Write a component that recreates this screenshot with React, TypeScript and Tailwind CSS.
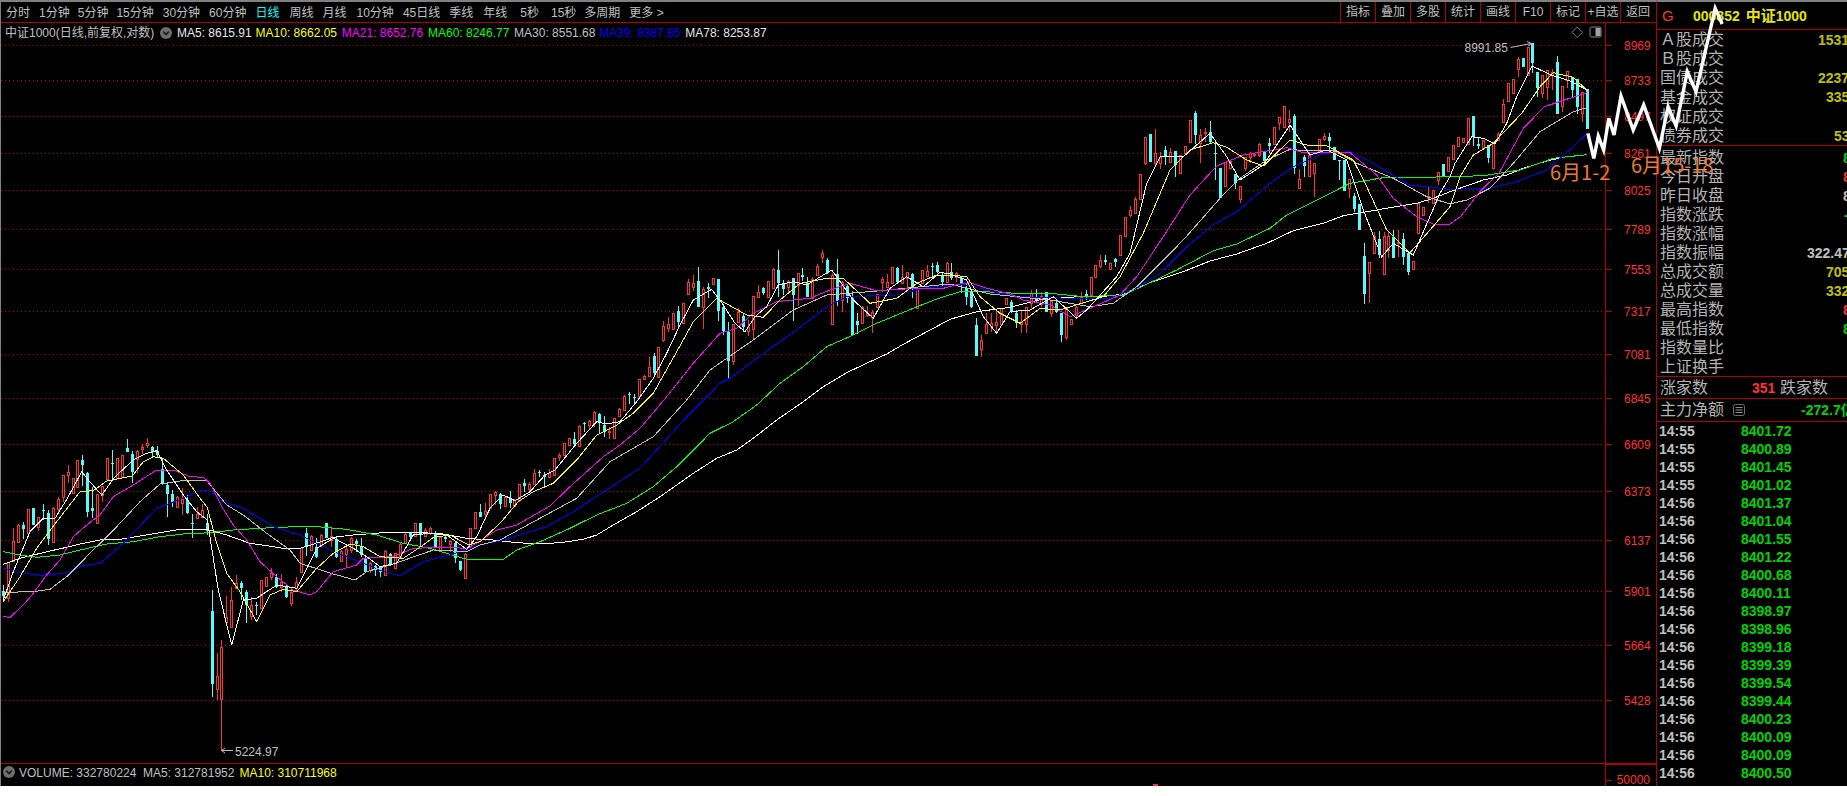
import React from "react";

type C = [number, number, number, number, number, number];
type Group = { ox: number; oy: number; items: C[] };

// [zoomX, cyan?, high, bodyTop, bodyBottom, low]
const groups: Group[] = [
  { ox: 0, oy: 420, items: [
    [10,1,495,513,528,540],[25,0,425,425,535,545],[40,0,325,362,422,422],[55,0,312,315,365,368],[70,1,307,315,327,358],[85,0,267,267,340,340],[100,1,265,265,315,315],[115,0,290,292,320,332],[130,1,252,270,272,300],[145,1,270,280,358,375],[160,0,262,265,365,365],[175,0,232,238,268,275],[190,0,165,165,232,245],[205,0,135,155,165,190],[220,0,175,175,220,220],[233,0,120,120,200,200],[248,1,105,120,135,198],[262,1,155,158,275,290],[277,1,200,264,272,295],[292,0,222,222,310,310],[307,0,197,197,225,245],[322,0,113,113,177,177],[337,1,90,128,131,180],[351,0,115,115,175,175],[367,0,105,105,172,172],[382,1,58,85,95,95],[397,1,92,102,155,190],[412,0,90,93,117,160],[427,0,72,82,87,102],[442,0,55,70,75,85],[457,1,78,80,97,110],[472,1,78,92,105,115],[487,1,115,148,190,195],[502,1,185,195,222,290],[517,1,210,222,250,262],[532,0,228,230,262,262],[547,0,205,238,250,285],[562,1,225,240,280,282],[577,1,282,310,312,355],[592,0,262,283,295,295],[607,0,252,270,290,290],[622,1,282,310,334,345],[637,1,510,573,792,832],[652,0,698,768,808,840],[665,0,660,682,836,990],[680,0,528,592,605,605],[695,0,502,540,620,620],[710,0,465,488,505,505],[725,1,482,488,505,540],[740,1,510,515,555,608],[755,0,530,555,588,600],[770,1,545,555,557,585],[785,0,480,480,565,565],[800,0,470,472,498,498],[814,0,445,460,470,480],[830,1,462,470,500,505],[845,0,462,485,500,515],[859,1,495,497,530,535],[875,0,505,515,550,558],[889,0,472,485,505,515],[905,0,385,385,455,455],[919,1,325,340,380,408],[934,0,345,348,390,392],[949,1,355,380,410,415],[964,0,342,345,378,380],[979,1,310,310,355,355],[994,0,325,347,360,380],[1009,1,350,358,410,415],[1024,0,390,393,423,425],[1039,0,380,388,403,440],[1054,0,352,355,390,400],[1069,1,358,362,372,395],[1083,1,355,382,405,410],[1097,1,410,413,455,460],[1111,0,425,430,450,458],[1126,1,435,437,450,468],[1141,1,440,440,455,470],[1156,0,390,392,465,465],[1171,1,400,402,432,438],[1186,0,398,400,445,447],[1201,0,370,372,410,415],[1216,0,340,342,370,372],[1231,1,335,340,350,360],[1246,0,308,310,348,350],[1260,1,310,310,345,382],[1275,0,325,330,348,350],[1290,0,322,325,340,345],[1305,1,332,340,382,385],[1320,0,350,352,392,392],[1336,1,345,350,358,365],[1352,0,360,362,372,395],[1366,1,365,368,415,428],[1381,1,422,422,450,452],[1396,0,400,402,473,473],[1411,0,325,325,382,382],[1426,0,275,275,325,325],
  ]},
  { ox: 460, oy: 230, items: [
    [60,1,822,846,860,860],[75,0,820,843,852,870],[90,0,792,792,833,833],[106,0,783,785,795,825],[121,1,790,792,822,837],[136,0,800,802,828,830],[151,1,783,803,820,833],[163,0,808,810,828,830],[178,0,762,763,810,815],[193,1,747,760,768,785],[208,0,755,763,778,785],[223,0,717,730,762,765],[238,1,720,727,730,742],[253,1,725,735,742,773],[268,0,718,730,742,745],[283,0,685,685,735,735],[298,0,670,675,680,692],[313,0,640,640,675,675],[328,0,623,625,645,648],[343,1,605,628,642,648],[358,0,585,587,647,647],[373,1,575,578,580,605],[388,0,570,572,585,597],[403,0,543,545,578,590],[418,1,548,553,580,610],[433,1,558,585,607,622],[448,0,592,603,607,628],[463,0,565,565,625,627],[478,0,535,538,558,560],[493,0,495,497,540,542],[508,1,487,493,495,522],[523,1,492,502,505,522],[538,0,446,448,497,500],[553,0,435,437,448,450],[568,0,380,410,437,437],[583,1,370,377,428,440],[596,0,352,352,442,442],[611,0,272,287,330,335],[626,0,262,283,293,305],[641,0,250,250,298,300],[655,1,228,243,275,290],[670,0,220,220,280,282],[685,0,148,155,192,195],[700,0,135,160,170,182],[715,1,112,153,230,232],[730,0,172,177,230,296],[745,1,158,172,178,205],[760,0,143,145,163,165],[775,1,148,148,242,272],[790,1,222,232,303,315],[805,1,277,305,392,445],[820,0,282,283,392,405],[835,0,235,245,277,280],[850,1,250,258,290,307],[865,0,270,292,302,318],[880,0,198,198,298,328],[895,0,165,187,200,205],[910,1,170,173,190,195],[925,0,153,153,200,200],[940,0,115,117,175,178],[955,1,60,120,160,200],[970,1,150,160,177,195],[985,0,150,152,172,190],[1000,1,145,145,195,272],[1015,0,128,130,165,228],[1027,1,115,135,140,152],[1042,1,140,160,200,200],[1057,0,140,148,205,208],[1073,0,103,107,135,137],[1087,0,60,70,82,98],[1102,1,85,90,130,133],[1117,0,130,135,282,282],[1132,1,88,133,212,228],[1147,0,153,155,210,245],[1162,1,165,167,205,220],[1177,1,182,205,315,315],[1192,1,250,273,285,312],[1207,0,228,230,280,282],[1222,0,228,248,255,262],[1237,0,240,245,262,308],[1252,0,192,192,232,235],[1267,0,140,147,157,185],[1282,0,132,157,170,172],[1297,0,112,112,158,160],[1312,1,112,115,155,157],[1327,0,105,142,158,160],[1342,0,125,127,143,180],[1357,1,130,132,175,205],[1372,0,175,175,235,237],[1387,0,120,120,158,160],[1402,0,105,123,138,142],[1417,1,100,107,110,148],[1432,1,97,105,125,130],[1447,1,125,135,155,172],[1462,0,95,98,155,158],[1474,1,100,127,142,145],[1489,0,125,130,142,155],
  ]},
  { ox: 950, oy: 100, items: [
    [5,1,490,518,533,540],[34,1,530,533,555,580],[49,1,550,565,592,615],[64,1,570,573,622,625],[79,1,655,675,768,768],[94,0,705,720,748,770],[109,0,640,672,700,700],[124,0,640,670,678,695],[139,0,630,665,675,700],[154,0,625,625,672,672],[169,0,595,595,613,613],[184,1,600,607,632,640],[199,1,630,638,668,685],[214,0,630,665,672,700],[229,0,620,620,672,700],[244,0,570,578,610,625],[259,1,568,592,600,610],[274,0,575,588,612,622],[289,1,577,577,635,635],[304,0,603,603,638,650],[319,1,600,610,635,638],[334,1,640,640,705,725],[349,0,623,623,710,720],[364,0,657,657,673,673],[379,0,618,622,645,650],[394,0,575,590,610,612],[409,1,570,582,592,600],[424,0,532,532,585,585],[437,0,495,495,532,532],[452,0,465,480,497,505],[467,1,465,480,485,495],[481,0,488,488,507,507],[496,1,475,478,485,502],[512,0,405,405,465,465],[527,0,352,352,407,407],[542,0,318,330,345,350],[557,0,290,298,340,340],[572,0,223,223,298,298],[587,0,112,112,190,195],[602,1,102,102,185,185],[617,0,88,160,190,195],[632,0,155,170,190,208],[647,1,138,150,168,195],[662,0,145,155,187,190],[677,1,153,153,195,230],[691,0,165,165,218,218],[706,0,137,137,158,158],[721,0,60,60,127,127],[736,1,33,40,105,132],[751,0,88,105,128,190],[766,0,85,95,100,125],[781,1,63,97,125,130],[796,1,122,160,162,240],[811,1,205,205,295,295],[826,0,185,185,258,262],[841,0,183,183,205,205],[856,1,222,222,248,268],[871,0,258,258,298,310],[885,0,172,172,205,212],[900,0,155,158,170,188],[914,0,160,162,165,170],[928,0,128,132,165,170],[943,1,155,155,183,183],[958,1,115,130,137,158],[973,0,82,82,132,132],[988,0,52,52,70,90],[1003,0,18,18,80,80],[1018,0,30,58,65,95],[1033,1,43,47,205,222],[1048,0,208,238,265,265],[1063,1,165,170,198,230],[1078,0,160,165,227,227],[1093,0,188,188,218,290],[1108,0,118,118,152,152],[1123,0,100,108,117,122],[1138,1,100,112,122,150],[1153,1,142,142,180,180],[1168,1,180,180,182,240],[1183,1,180,180,272,272],[1198,0,238,238,265,295],[1213,1,280,288,327,335],[1228,1,312,312,390,390],[1243,1,428,468,583,612],[1258,0,485,485,518,608],[1273,0,395,408,458,460],[1288,1,392,418,465,475],[1303,0,395,408,523,525],[1316,0,395,408,450,475],[1331,1,390,412,473,473],[1346,0,390,425,430,470],[1361,1,398,418,470,495],[1376,1,458,458,515,525],[1391,0,482,482,508,508],[1406,0,310,310,400,400],[1421,0,322,322,345,345],[1436,0,260,287,295,308],[1451,0,270,270,310,310],[1466,0,215,215,240,255],[1481,1,192,192,232,232],
  ]},
  { ox: 1340, oy: 0, items: [
    [326,0,470,470,513,513],[341,0,435,435,477,477],[356,0,410,410,437,437],[371,0,415,415,425,430],[386,0,355,355,433,433],[401,1,348,348,410,437],[416,1,410,432,437,447],[431,0,420,420,445,447],[446,1,435,435,473,490],[461,0,425,425,505,505],[476,0,395,402,420,420],[491,0,298,312,365,365],[506,0,250,250,303,303],[521,0,236,236,278,278],[536,0,172,178,208,230],[551,1,175,175,200,200],[566,0,142,142,225,225],[578,1,130,130,190,218],[593,1,215,215,265,292],[608,0,225,225,280,295],[622,0,210,210,260,300],[637,0,207,215,225,270],[652,1,168,185,342,342],[667,0,258,258,318,335],[682,0,212,212,240,265],[697,1,232,232,270,295],[712,1,238,238,322,342],[727,0,275,275,340,365],[742,1,267,267,387,387],
  ]},
];

const seg = (ox: number, oy: number, p: number[]) => {
  const out: string[] = [];
  for (let i = 0; i < p.length; i += 2) out.push(`${(ox + p[i] / 3).toFixed(1)},${(oy + p[i + 1] / 3).toFixed(1)}`);
  return out.join(" ");
};
const line = (a: number[], b: number[], c: number[], d: number[]) =>
  [seg(0, 420, a), seg(460, 230, b), seg(950, 100, c), seg(1340, 0, d)].join(" ");

const mas: { color: string; pts: string }[] = [
  { color: "#ffffff", pts: line(
    [10,433,60,415,100,405,150,393,200,382,250,370,300,360,360,358,420,348,480,338,540,328,620,328,680,345,750,370,800,377,850,385,900,385,950,370,1000,352,1060,345,1150,338,1250,337,1330,342,1400,355],
    [60,928,100,930,160,937,230,942,300,938,370,928,410,915,460,885,530,845,600,800,650,765,700,730,770,685,830,660,880,625,950,570,1030,515,1090,470,1160,428,1230,395,1280,372,1330,343,1420,295],
    [0,658,80,635,180,622,300,592,450,590,520,583,600,548,700,515,780,483,860,462,950,430,1030,392,1120,370,1180,347,1250,335,1350,318,1400,310,1450,295],
    [330,575,430,540,500,525,550,505,620,483,680,470,740,464]) },
  { color: "#00ff00", pts: line(
    [10,395,60,405,110,412,180,405,250,388,320,372,400,365,480,350,550,342,630,338,700,330,780,325,930,318,1040,328,1130,345,1210,370,1290,385,1340,400,1400,418],
    [60,990,130,988,170,960,240,935,330,895,410,855,500,820,580,770,650,710,750,610,820,575,890,525,960,460,1030,410,1100,350,1180,315,1250,280,1360,235,1430,207],
    [30,575,100,575,200,580,320,582,400,590,520,585,600,548,680,510,790,452,860,432,960,385,1010,345,1130,285,1200,250,1300,233,1420,232],
    [330,530,430,527,540,510,640,475,740,464]) },
  { color: "#0000ff", pts: line(
    [10,445,60,458,130,467,200,458,250,437,300,430,370,370,470,265,550,235,600,212,625,210,670,245,730,265,820,320,900,345,1000,395,1080,425,1150,455,1200,467,1270,425,1350,405],
    [60,945,130,930,260,890,340,845,470,760,540,715,680,560,780,460,810,445,890,385,1010,300,1100,230,1160,200,1310,195,1390,175],
    [30,552,70,560,140,578,210,590,360,595,480,595,560,565,630,520,710,440,790,375,860,335,960,250,1030,200,1120,160,1200,155,1270,190,1380,255],
    [330,568,450,565,530,545,620,510,700,440,742,400]) },
  { color: "#c0c0c0", pts: line(
    [10,517,100,515,150,508,200,470,270,400,350,320,420,245,480,192,540,183,620,182,680,255,730,285,800,340,870,390,900,430,1000,462,1065,480,1100,455,1180,432,1300,390,1400,395],
    [60,945,120,930,230,870,350,805,450,695,580,620,680,510,750,420,800,385,880,330,1000,240,1100,195,1170,190,1250,183],
    [0,552,120,582,300,600,420,620,490,610,560,560,700,420,810,295,870,235,950,180,1020,148,1060,152,1150,150,1220,190,1330,235,1430,290],
    [330,612,380,600,450,565,520,490,600,395,700,335,740,323]) },
  { color: "#ff00ff", pts: line(
    [10,590,30,592,70,555,100,520,140,465,180,420,220,350,260,315,300,285,340,230,400,195,470,150,520,150,570,170,610,172,630,190,665,260,700,315,740,360,780,425,830,470,880,510,930,525,950,515,1000,455,1070,435,1090,415,1180,410,1240,385,1330,382,1400,385],
    [50,940,110,900,170,885,270,828,330,770,430,680,480,645,540,595,620,500,700,400,780,310,830,295,880,250,950,215,1050,205,1110,180,1170,160,1250,182,1370,175,1450,175],
    [30,552,60,548,110,565,180,582,220,600,300,615,360,650,420,625,510,585,560,530,640,410,720,285,800,198,880,165,1010,143,1060,158,1200,158,1280,225,1330,295,1400,350,1450,372],
    [330,672,361,650,424,570,477,520,550,385,613,320,740,278]) },
  { color: "#ffff00", pts: line(
    [10,545,60,470,110,385,170,305,240,215,280,212,320,183,397,168,430,125,460,110,490,115,550,165,600,235,622,262,650,370,680,460,720,515,770,605,810,525,850,508,890,515,950,445,1000,400,1050,372,1090,380,1140,410,1210,415,1270,375,1300,352,1350,345,1400,372],
    [25,945,60,935,120,880,175,815,220,785,280,760,350,690,410,615,470,585,520,550,580,490,650,365,700,275,770,205,860,255,910,262,960,210,1020,160,1100,145,1150,145,1230,220,1310,205,1370,160,1430,135],
    [0,525,50,530,90,590,150,640,210,670,270,625,330,630,460,590,510,530,580,400,660,210,720,150,790,128,830,142,890,180,940,198,1020,120,1070,135,1130,137,1210,180,1250,260,1310,390,1380,458,1440,390],
    [330,620,360,530,400,465,460,430,545,340,600,260,640,218,700,232,742,272]) },
  { color: "#f4f4f4", pts: line(
    [10,540,40,455,90,335,130,295,165,295,205,230,245,155,265,180,305,225,345,170,400,120,440,100,470,92,500,150,550,225,590,275,622,300,655,510,695,675,730,540,770,535,830,495,890,505,950,385,1000,355,1060,385,1100,410,1140,440,1190,430,1240,345,1290,340,1340,345,1400,388],
    [50,920,90,835,130,795,165,812,210,785,255,735,285,720,350,640,410,575,440,582,480,575,530,515,580,445,620,370,660,285,700,210,755,178,790,225,825,280,855,305,885,260,920,230,955,165,1000,155,1040,165,1115,120,1180,210,1240,265,1290,175,1340,140,1390,170,1440,127],
    [0,522,50,540,100,650,140,700,180,635,240,630,310,590,380,655,410,630,500,530,540,460,590,250,630,170,700,170,780,100,830,170,870,240,940,195,1020,75,1080,165,1130,150,1190,180,1240,330,1295,470,1330,430,1390,465,1470,280],
    [330,530,345,490,395,410,430,415,465,432,500,370,530,290,576,198,634,225,696,245,740,270]) },
];

const axis: [string, number][] = [["8969",45.5],["8733",80.5],["8497",116.5],["8261",153.5],["8025",190.5],["7789",229.5],["7553",269.5],["7317",311.5],["7081",354.5],["6845",398.5],["6609",444.5],["6373",491.5],["6137",540.5],["5901",591.5],["5664",645.5],["5428",700.5]];

const handLine = "1587.9,133.3 1593.8,158.3 1598.3,136 1603.6,150 1608.8,118.3 1614,135 1621,96 1633.2,130 1643.7,105 1659.4,148.3 1668.1,106.7 1676.1,126 1687.3,71.7 1696,91.7 1715.2,8.3 1722.2,24";

const Chevron = () => (
  <svg width="12" height="12" viewBox="0 0 12 12" className="shrink-0">
    <circle cx="6" cy="6" r="6" fill="#6e6e6e" />
    <path d="M3.2 4.6 L6 7.6 L8.8 4.6" fill="none" stroke="#1a1a1a" strokeWidth="1.6" />
  </svg>
);

const left = [
  { t: "分时", c: "" }, { t: "1分钟", c: "ml-[9px]" }, { t: "5分钟", c: "ml-[8px]" }, { t: "15分钟", c: "ml-[8px]" }, { t: "30分钟", c: "ml-[9px]" }, { t: "60分钟", c: "ml-[9px]" },
  { t: "日线", c: "ml-[9px] text-[#00ffff]" }, { t: "周线", c: "ml-[10px]" }, { t: "月线", c: "ml-[9px]" }, { t: "10分钟", c: "ml-[10px]" }, { t: "45日线", c: "ml-[9px]" }, { t: "季线", c: "ml-[9px]" }, { t: "年线", c: "ml-[10px]" },
  { t: "5秒", c: "ml-[13px]" }, { t: "15秒", c: "ml-[12px]" }, { t: "多周期", c: "ml-[8px]" }, { t: "更多 >", c: "ml-[9px]" },
];
const rightTools = ["指标", "叠加", "多股", "统计", "画线", "F10", "标记", "+自选", "返回"];

const infoRow: { t: string; c: string }[] = [
  { t: "MA5: 8615.91", c: "w-[78.6px] text-[#e8e8e8]" },
  { t: "MA10: 8662.05", c: "w-[86.2px] text-[#ffff00]" },
  { t: "MA21: 8652.76", c: "w-[86.2px] text-[#ff00ff]" },
  { t: "MA60: 8246.77", c: "w-[86.1px] text-[#00ff00]" },
  { t: "MA30: 8551.68", c: "w-[85.2px] text-[#c0c0c0]" },
  { t: "MA39: 8387.85", c: "w-[86px] text-[#0000ff]" },
  { t: "MA78: 8253.87", c: "text-[#e8e8e8]" },
];

const sec1: { l: string; v: string; c: string }[] = [
  { l: "Ａ股成交", v: "1531", c: "ml-[94px] text-[#c0c000]" },
  { l: "Ｂ股成交", v: "", c: "" },
  { l: "国债成交", v: "2237", c: "ml-[94px] text-[#c0c000]" },
  { l: "基金成交", v: "335", c: "ml-[102px] text-[#c0c000]" },
  { l: "权证成交", v: "", c: "" },
  { l: "债券成交", v: "53", c: "ml-[110px] text-[#c0c000]" },
];
const sec2: { l: string; v: string; c: string }[] = [
  { l: "最新指数", v: "8", c: "ml-[119px] text-[#00d400]" },
  { l: "今日开盘", v: "8", c: "ml-[119px] text-[#ff3232]" },
  { l: "昨日收盘", v: "8", c: "ml-[119px] text-[#c0c0c0]" },
  { l: "指数涨跌", v: "-", c: "ml-[120px] text-[#00d400]" },
  { l: "指数涨幅", v: "", c: "" },
  { l: "指数振幅", v: "322.47", c: "ml-[83px] text-[#c0c0c0]" },
  { l: "总成交额", v: "705", c: "ml-[102px] text-[#c0c000]" },
  { l: "总成交量", v: "332", c: "ml-[102px] text-[#c0c000]" },
  { l: "最高指数", v: "8", c: "ml-[119px] text-[#ff3232]" },
  { l: "最低指数", v: "8", c: "ml-[119px] text-[#00d400]" },
  { l: "指数量比", v: "", c: "" },
  { l: "上证换手", v: "", c: "" },
];
const ticks: [string, string][] = [
  ["14:55","8401.72"],["14:55","8400.89"],["14:55","8401.45"],["14:55","8401.02"],["14:56","8401.37"],["14:56","8401.04"],["14:56","8401.55"],["14:56","8401.22"],["14:56","8400.68"],["14:56","8400.11"],["14:56","8398.97"],["14:56","8398.96"],["14:56","8399.18"],["14:56","8399.39"],["14:56","8399.54"],["14:56","8399.44"],["14:56","8400.23"],["14:56","8400.09"],["14:56","8400.09"],["14:56","8400.50"],
];

function Row({ l, v, c, h }: { l: string; v: string; c: string; h: string }) {
  return (
    <div className={`flex items-center pl-[3px] whitespace-nowrap ${h}`}>
      <span className="w-[64px] shrink-0 text-[16px] leading-[19px] text-[#b4b4b4]">{l}</span>
      {v && <span className={`shrink-0 text-[14px] font-bold ${c}`}>{v}</span>}
    </div>
  );
}

function Chart() {
  return (
    <svg width="1655" height="740" viewBox="1 23 1655 740" className="block">
      <g shapeRendering="crispEdges">
        {axis.map(([, y]) => (
          <g key={y}>
            <line x1="1" x2="1605" y1={y} y2={y} stroke="#c80000" strokeDasharray="1 3" />
            <line x1="1605" x2="1612" y1={y} y2={y} stroke="#b00000" />
          </g>
        ))}
        <line x1="1605.5" x2="1605.5" y1="23" y2="763" stroke="#b00000" />
      </g>
      {axis.map(([t, y]) => (
        <text key={t} x="1624" y={y + 4.5} fontSize="12" fill="#ff3232">{t}</text>
      ))}
      <g shapeRendering="crispEdges">
        {groups.flatMap((g, gi) =>
          g.items.map((c, i) => {
            const [zx, cy, h, t, b, l] = c;
            const k = Math.floor(g.ox + zx / 3);
            const cx = k + 0.5;
            const Y = (v: number) => Math.round(g.oy + v / 3);
            const bh = Math.max(Y(b) - Y(t), 1);
            if (cy) {
              return (
                <g key={`${gi}-${i}`}>
                  <line x1={cx} x2={cx} y1={Y(h)} y2={Y(l)} stroke="#54fcfc" />
                  <rect x={k - 1} y={Y(t)} width="3" height={bh} fill="#54fcfc" />
                </g>
              );
            }
            return (
              <g key={`${gi}-${i}`}>
                <line x1={cx} x2={cx} y1={Y(h)} y2={Y(t)} stroke="#ff3232" />
                <line x1={cx} x2={cx} y1={Y(b)} y2={Y(l)} stroke="#ff3232" />
                <rect x={cx - 1} y={Y(t) + 0.5} width="2" height={bh} fill="#000" stroke="#ff3232" />
              </g>
            );
          })
        )}
        {mas.map((m) => (
          <polyline key={m.color} points={m.pts} fill="none" stroke={m.color} strokeWidth="1" />
        ))}
      </g>
      <text x="1464.5" y="52" fontSize="12" fill="#c0c0c0">8991.85</text>
      <path d="M1510.5 47.5 L1531 43.5 M1527 41.5 L1531.5 43.5 L1528 46" fill="none" stroke="#c0c0c0" />
      <text x="235" y="756" fontSize="12" fill="#c0c0c0">5224.97</text>
      <path d="M221.5 750.5 H233 M225 748 L221.5 750.5 L225 753" fill="none" stroke="#c0c0c0" />
      <path d="M1577.3 27 L1582.5 32.3 L1577.3 37.5 L1572 32.3 Z" fill="none" stroke="#7a7a7a" />
      <rect x="1590" y="27" width="11" height="10" rx="1.5" fill="none" stroke="#8a8a8a" />
      <rect x="1595.5" y="28" width="5" height="8" fill="#a0a0a0" />
    </svg>
  );
}

export default function App() {
  return (
    <div className="relative flex h-[786px] w-[1847px] overflow-hidden bg-black font-['Liberation_Sans','Noto_Sans_CJK_SC',sans-serif] text-[12px] leading-none text-[#c0c0c0]">
      <div className="flex w-[1656px] shrink-0 flex-col border-t-2 border-l border-[#808080]">
        <div className="flex h-[21px] shrink-0 items-center justify-between border-b border-[#b00000]">
          <div className="flex items-center whitespace-nowrap pl-[5px] pt-[1px]">
            {left.map((x) => (
              <span key={x.t} className={x.c}>{x.t}</span>
            ))}
          </div>
          <div className="flex h-full">
            {rightTools.map((t) => (
              <span key={t} className="flex w-[35px] items-center justify-center whitespace-nowrap border-l border-[#b00000]">{t}</span>
            ))}
            <span className="w-[1px]" />
          </div>
        </div>
        <div className="relative h-[740px] shrink-0">
          <Chart />
          <div className="absolute left-[4px] top-[4px] flex items-center whitespace-nowrap">
            <span className="w-[155px] shrink-0 text-[#c0c0c0]">中证1000(日线,前复权,对数)</span>
            <span className="mr-[5px]"><Chevron /></span>
            {infoRow.map((x) => (
              <span key={x.t} className={`shrink-0 ${x.c}`}>{x.t}</span>
            ))}
          </div>
        </div>
        <div className="flex min-h-0 flex-1 border-t border-[#b00000]">
          <div className="relative flex w-[1604px] shrink-0 items-start pl-[2px] pt-[2px] whitespace-nowrap">
            <Chevron />
            <span className="ml-[4px] mt-[1px] w-[124px] shrink-0">VOLUME: 332780224</span>
            <span className="mt-[1px] w-[96.5px] shrink-0">MA5: 312781952</span>
            <span className="mt-[1px] text-[#ffff00]">MA10: 310711968</span>
            <span className="absolute bottom-0 left-[1152px] h-[2px] w-[5px] bg-[#ff3232]" />
          </div>
          <div className="relative flex flex-1 items-end justify-end border-t border-l border-[#b00000] pr-[6px] text-[#ff3232]">
            <span className="absolute left-0 top-[15px] h-[1px] w-[6px] bg-[#b00000]" />
            <span>50000</span>
          </div>
        </div>
      </div>

      <div className="flex w-[191px] shrink-0 flex-col overflow-hidden border-t-2 border-l border-[#808080] border-l-[#b00000]">
        <div className="flex h-[28px] shrink-0 items-center whitespace-nowrap border-b border-[#b00000] pl-[5px]">
          <span className="w-[31px] shrink-0 text-[15px] text-[#ff3232]">G</span>
          <span className="shrink-0 text-[14px] font-bold text-[#e6e600]">000852</span>
          <span className="ml-[6px] shrink-0 text-[15px] font-bold text-[#e6e600]">中证</span>
          <span className="shrink-0 text-[14px] font-bold text-[#e6e600]">1000</span>
        </div>
        <div className="h-[116px] shrink-0 border-b border-[#b00000]">
          {sec1.map((r) => <Row key={r.l} l={r.l} v={r.v} c={r.c} h="h-[19.2px]" />)}
        </div>
        <div className="h-[231px] shrink-0 border-b border-[#b00000] pt-[2px]">
          {sec2.map((r) => <Row key={r.l} l={r.l} v={r.v} c={r.c} h="h-[19px]" />)}
        </div>
        <div className="flex h-[22px] shrink-0 items-center whitespace-nowrap border-b border-[#b00000] pl-[3px]">
          <span className="w-[48px] shrink-0 text-[16px] text-[#b4b4b4]">涨家数</span>
          <span className="ml-[44px] w-[28px] shrink-0 text-[14px] font-bold text-[#ff3232]">351</span>
          <span className="shrink-0 text-[16px] text-[#b4b4b4]">跌家数</span>
        </div>
        <div className="flex h-[23px] shrink-0 items-center whitespace-nowrap border-b border-[#b00000] pl-[3px]">
          <span className="w-[64px] shrink-0 text-[16px] text-[#b4b4b4]">主力净额</span>
          <svg width="12" height="12" viewBox="0 0 12 12" className="ml-[9px] shrink-0">
            <rect x="0.5" y="0.5" width="11" height="11" rx="2" fill="none" stroke="#707070" />
            <path d="M2.5 3.5 H9.5 M2.5 6 H9.5 M2.5 8.5 H9.5" stroke="#909090" />
          </svg>
          <span className="ml-[56px] shrink-0 text-[14px] font-bold text-[#00d400]">-272.7亿</span>
        </div>
        <div>
          {ticks.map(([a, b], i) => (
            <div key={i} className="flex h-[18px] items-center pl-[2px] text-[14px] font-bold">
              <span className="w-[82px] shrink-0 text-[#c0c0c0]">{a}</span>
              <span className="shrink-0 text-[#00d400]">{b}</span>
            </div>
          ))}
        </div>
      </div>

      <svg width="1847" height="786" viewBox="0 0 1847 786" className="pointer-events-none absolute left-0 top-0">
        <polyline points={handLine} fill="none" stroke="#ffffff" strokeWidth="3.4" strokeLinejoin="miter" />
      </svg>
      <span className="pointer-events-none absolute left-[1550px] top-[158px] whitespace-nowrap font-['Noto_Sans_CJK_SC','Liberation_Sans',sans-serif] text-[20px] leading-[28px] text-[#ee7a2c]">6月1-2</span>
      <span className="pointer-events-none absolute left-[1631px] top-[151px] whitespace-nowrap font-['Noto_Sans_CJK_SC','Liberation_Sans',sans-serif] text-[20px] leading-[28px] text-[#ee7a2c]">6月15-18</span>
    </div>
  );
}
